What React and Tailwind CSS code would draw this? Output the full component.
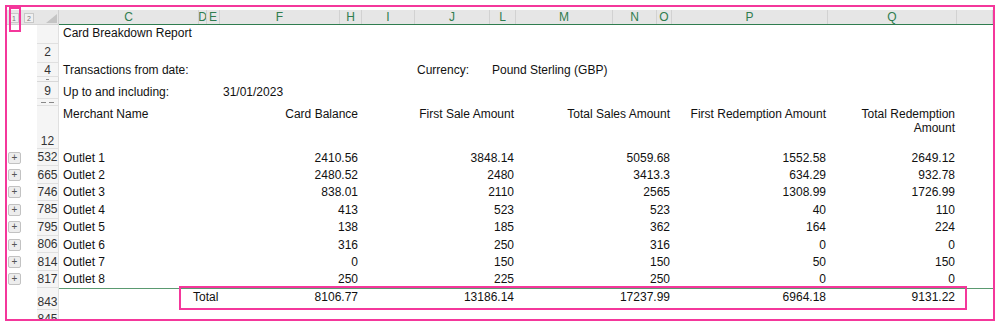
import React from "react";

// column template: C D E F H I J L M N O P Q (rest)
const COLS =
  "grid w-[934px] grid-cols-[140px_8px_13px_120px_22px_53px_75px_26px_97px_44px_15px_156px_129px_36px]";

const letters = ["C", "D", "E", "F", "H", "I", "J", "L", "M", "N", "O", "P", "Q", ""];

const outlets = [
  ["532", "Outlet 1", "2410.56", "3848.14", "5059.68", "1552.58", "2649.12"],
  ["665", "Outlet 2", "2480.52", "2480", "3413.3", "634.29", "932.78"],
  ["746", "Outlet 3", "838.01", "2110", "2565", "1308.99", "1726.99"],
  ["785", "Outlet 4", "413", "523", "523", "40", "110"],
  ["795", "Outlet 5", "138", "185", "362", "164", "224"],
  ["806", "Outlet 6", "316", "250", "316", "0", "0"],
  ["814", "Outlet 7", "0", "150", "150", "50", "150"],
  ["817", "Outlet 8", "250", "225", "250", "0", "0"],
];

const LevelBtn = ({ children }) => (
  <div className="flex h-[10px] w-[10px] items-center justify-center border border-[#c8c8c8] bg-[#f0f0f0] text-[7px] leading-none text-[#777]">
    {children}
  </div>
);

const PlusBtn = () => (
  <div className="ml-[1px] flex h-[12px] w-[13px] items-center justify-center rounded-[2px] border border-[#c2c2c2] bg-[#ededed] text-[10px] leading-none text-[#555]">
    +
  </div>
);

function Row({ h, num, plus, numClass = "items-end", children }) {
  return (
    <div className={`flex ${h}`}>
      <div className="flex w-[30px] items-center">{plus && <PlusBtn />}</div>
      <div
        className={`flex w-[22px] justify-center border-r border-b border-[#e0e0e0] bg-[#f5f5f5] text-[12px] leading-[14px] text-[#333] ${numClass}`}
      >
        {num}
      </div>
      <div className={COLS}>{children}</div>
    </div>
  );
}

const App = () => {
  return (
    <div className="h-[327px] w-[1000px] bg-white pl-[5px] pt-[5px] font-['Liberation_Sans',Arial,sans-serif] text-[#111]">
      <div className="relative h-[316px] w-[990px] overflow-hidden border-2 border-[#f4379b]">
        {/* column header band */}
        <div className="pt-[3px]">
          <div className="flex h-[14px] bg-[#e6e6e6]">
            <div className="flex w-[30px] items-start gap-[5px] pl-[2px] pt-[3px]">
              <LevelBtn>1</LevelBtn>
              <LevelBtn>2</LevelBtn>
            </div>
            <div className="flex w-[22px] items-end justify-end border-r border-[#cfcfcf] pb-[1px] pr-[1px]">
              <svg width="11" height="9" viewBox="0 0 11 9">
                <polygon points="11,0 11,9 0,9" fill="#c4c4c4" />
              </svg>
            </div>
            <div className={COLS}>
              {letters.map((l, i) => (
                <div
                  key={i}
                  className="flex items-center justify-center overflow-hidden border-r border-[#d2d2d2] text-[12px] leading-none text-[#2f7d4f]"
                >
                  {l}
                </div>
              ))}
            </div>
          </div>
          <div className="flex h-[1px]">
            <div className="w-[52px] bg-[#d4d4d4]" />
            <div className="flex-1 bg-[#2f7d4f]" />
          </div>
        </div>

        <div className="text-[12px] leading-[14px]">
          {/* row 1 */}
          <Row h="h-[19px]" num="">
            <div className="col-span-3 whitespace-nowrap pl-[4px] pt-[1px]">Card Breakdown Report</div>
          </Row>
          {/* row 2 */}
          <Row h="h-[19px]" num="2" numClass="items-end pb-[3px]" />
          {/* row 4 */}
          <Row h="h-[14px]" num="4" numClass="items-center">
            <div className="col-span-3 whitespace-nowrap pl-[4px]">Transactions from date:</div>
            <div className="col-start-7 whitespace-nowrap pl-[2px]">Currency:</div>
            <div className="col-start-8 col-span-4 whitespace-nowrap pl-[2px]">Pound Sterling (GBP)</div>
          </Row>
          {/* collapsed rows marker */}
          <div className="flex h-[5px]">
            <div className="w-[30px]" />
            <div className="flex w-[22px] items-center justify-center border-r border-b border-[#d8d8d8] bg-[#f5f5f5]">
              <div className="h-[1px] w-[3px] bg-[#888]" />
            </div>
          </div>
          {/* row 9 */}
          <Row h="h-[17px]" num="9" numClass="items-end">
            <div className="col-span-3 whitespace-nowrap pl-[4px] pt-[3px]">Up to and including:</div>
            <div className="col-start-4 col-span-2 whitespace-nowrap pl-[3px] pt-[3px]">31/01/2023</div>
          </Row>
          {/* collapsed rows marker */}
          <div className="flex h-[7px]">
            <div className="w-[30px]" />
            <div className="flex w-[22px] items-end justify-center gap-[3px] border-r border-b border-[#e0e0e0] bg-[#f5f5f5] pb-[2px]">
              <div className="h-[1px] w-[5px] bg-[#888]" />
              <div className="h-[1px] w-[5px] bg-[#888]" />
            </div>
          </div>
          {/* row 12: column titles */}
          <Row h="h-[43px]" num="12" numClass="items-end">
            <div className="col-span-3 whitespace-nowrap pl-[4px] pt-[1px]">Merchant Name</div>
            <div className="col-start-4 col-span-2 whitespace-nowrap pr-[4px] pt-[1px] text-right">Card Balance</div>
            <div className="col-start-6 col-span-3 whitespace-nowrap pr-[2px] pt-[1px] text-right">First Sale Amount</div>
            <div className="col-start-9 col-span-3 whitespace-nowrap pr-[2px] pt-[1px] text-right">Total Sales Amount</div>
            <div className="col-start-12 whitespace-nowrap pr-[2px] pt-[1px] text-right">First Redemption Amount</div>
            <div className="col-start-13 pr-[2px] pt-[1px] text-right">
              Total Redemption
              <br />
              Amount
            </div>
          </Row>

          {/* outlet rows */}
          {outlets.map((o) => (
            <Row key={o[0]} h="h-[17.4px]" num={o[0]} plus numClass="items-center">
              <div className="col-span-3 flex items-center whitespace-nowrap pl-[4px]">{o[1]}</div>
              <div className="col-start-4 col-span-2 flex items-center justify-end pr-[4px]">{o[2]}</div>
              <div className="col-start-6 col-span-3 flex items-center justify-end pr-[2px]">{o[3]}</div>
              <div className="col-start-9 col-span-3 flex items-center justify-end pr-[2px]">{o[4]}</div>
              <div className="col-start-12 flex items-center justify-end pr-[2px]">{o[5]}</div>
              <div className="col-start-13 flex items-center justify-end pr-[2px]">{o[6]}</div>
            </Row>
          ))}

          {/* green rule above totals */}
          <div className="flex h-[1px]">
            <div className="w-[30px]" />
            <div className="w-[22px] border-r border-[#e0e0e0] bg-[#f5f5f5]" />
            <div className="flex-1 bg-[#5a9a70]" />
          </div>

          {/* totals */}
          <Row h="h-[21px]" num="843" numClass="items-end">
            <div className="col-span-3 whitespace-nowrap pl-[134px] pt-[1px]">Total</div>
            <div className="col-start-4 col-span-2 pr-[4px] pt-[1px] text-right">8106.77</div>
            <div className="col-start-6 col-span-3 pr-[2px] pt-[1px] text-right">13186.14</div>
            <div className="col-start-9 col-span-3 pr-[2px] pt-[1px] text-right">17237.99</div>
            <div className="col-start-12 pr-[2px] pt-[1px] text-right">6964.18</div>
            <div className="col-start-13 pr-[2px] pt-[1px] text-right">9131.22</div>
          </Row>
          <Row h="h-[20px]" num="845" numClass="items-start pt-[2px]" />
        </div>

        {/* annotation boxes */}
        <div className="absolute left-[2px] top-0 h-[25px] w-[12px] border-2 border-[#f4379b]" />
        <div className="absolute left-[172px] top-[279px] h-[24px] w-[788px] border-2 border-[#f4379b]" />
      </div>
    </div>
  );
};

export default App;
